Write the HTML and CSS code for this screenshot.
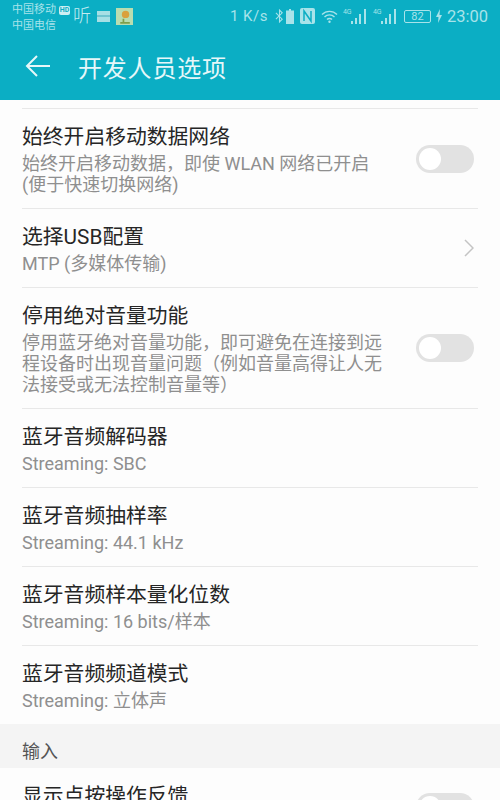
FILE: index.html
```html
<!DOCTYPE html>
<html lang="zh-CN">
<head>
<meta charset="utf-8">
<title>开发人员选项</title>
<link rel="stylesheet" href="styles.css">
</head>
<body>
<div class="phone">
  <header class="header">
    <div class="status">
      <div class="carriers">
        <div class="carrier">中国移动<span class="hd">HD</span></div>
        <div class="carrier">中国电信</div>
      </div>
      <div class="notifs">
        <span class="ting">听</span>
        <svg class="n-mail" viewBox="0 0 13 14"><rect width="13" height="14" y="0" fill="#0baec4"/><rect y="2" width="13" height="11" fill="#a6dfe5"/><rect y="6" width="13" height="2" fill="#6fc4d0"/></svg>
        <svg class="n-app" viewBox="0 0 16 16"><rect width="16" height="16" fill="#b9ddb0"/><circle cx="9" cy="6" r="3.500" fill="#d9a13c"/><path d="M4 14h9M7 10v4" stroke="#7f9e4c" stroke-width="1.600"/></svg>
      </div>
      <div class="spacer"></div>
      <div class="sys">
        <span class="speed">1 K/s</span>
        <svg class="i-bt" viewBox="0 0 10 16"><path d="M1 4.500l7 7L5 14.500V1.500l3 3-7 7" fill="none" stroke="#a8e3ea" stroke-width="1.200"/></svg>
        <svg class="i-batsm" viewBox="0 0 8 15"><path d="M3 0h2v1.500h3V15H0V1.500h3z" fill="#a8e3ea"/></svg>
        <svg class="i-nfc" viewBox="0 0 15 16"><rect width="15" height="16" rx="2" fill="#a8e3ea"/><path d="M4 13V3l7 10V3" fill="none" stroke="#0baec4" stroke-width="1.500"/></svg>
        <svg class="i-wifi" viewBox="0 0 17 14"><path d="M1 5.500a10.500 10.500 0 0 1 15 0M3.500 8a7 7 0 0 1 10 0M6 10.500a3.500 3.500 0 0 1 5 0" fill="none" stroke="#a8e3ea" stroke-width="1.400"/><circle cx="8.500" cy="12.800" r="1.200" fill="#a8e3ea"/></svg>
        <span class="sig"><span class="sig-t">4G</span><svg class="i-sig" viewBox="0 0 16 15"><path d="M0 15v-3h2v3zM4 15V9h2v6zM8 15V5h2v10zM13 15V0h2v15z" fill="#a8e3ea"/></svg></span>
        <span class="sig"><span class="sig-t">4G</span><svg class="i-sig" viewBox="0 0 16 15"><path d="M0 15v-3h2v3zM4 15V9h2v6zM8 15V5h2v10zM13 15V0h2v15z" fill="#a8e3ea"/></svg></span>
        <span class="bat">82</span>
        <svg class="i-bolt" viewBox="0 0 6 14"><path d="M4 0L0 8h2.500L2 14l4-8H3.500z" fill="#a8e3ea"/></svg>
        <span class="time">23:00</span>
      </div>
    </div>
    <div class="toolbar">
      <svg class="back" viewBox="0 0 26 24"><path d="M25 12H2M12 2L2 12l10 10" fill="none" stroke="#e6f7f9" stroke-width="2"/></svg>
      <h1 class="title">开发人员选项</h1>
    </div>
  </header>
  <main class="list">
    <div class="top-gap"></div>
    <div class="row">
      <div class="text"><div class="t">始终开启移动数据网络</div><div class="s">始终开启移动数据，即使 WLAN 网络已开启<br>(便于快速切换网络)</div></div>
      <span class="switch"></span>
    </div>
    <div class="row">
      <div class="text"><div class="t">选择USB配置</div><div class="s">MTP (多媒体传输)</div></div>
      <svg class="chev" viewBox="0 0 10 18"><path d="M1 1l8 8-8 8" fill="none" stroke="#c4c4c4" stroke-width="1.500"/></svg>
    </div>
    <div class="row">
      <div class="text"><div class="t">停用绝对音量功能</div><div class="s">停用蓝牙绝对音量功能，即可避免在连接到远<br>程设备时出现音量问题（例如音量高得让人无<br>法接受或无法控制音量等）</div></div>
      <span class="switch"></span>
    </div>
    <div class="row">
      <div class="text"><div class="t">蓝牙音频解码器</div><div class="s">Streaming: SBC</div></div>
    </div>
    <div class="row">
      <div class="text"><div class="t">蓝牙音频抽样率</div><div class="s">Streaming: 44.1 kHz</div></div>
    </div>
    <div class="row">
      <div class="text"><div class="t">蓝牙音频样本量化位数</div><div class="s">Streaming: 16 bits/样本</div></div>
    </div>
    <div class="row">
      <div class="text"><div class="t">蓝牙音频频道模式</div><div class="s">Streaming: 立体声</div></div>
    </div>
    <div class="section">输入</div>
    <div class="row">
      <div class="text"><div class="t">显示点按操作反馈</div></div>
      <span class="switch peek"></span>
    </div>
  </main>
</div>
</body>
</html>
```
FILE: styles.css
```css
* { box-sizing: border-box; }
html, body { margin: 0; padding: 0; }
body { font-family: Roboto, "Noto Sans CJK SC", sans-serif; background: #fdfdfd; }
.phone { width: 500px; height: 800px; overflow: hidden; display: flex; flex-direction: column; }

.header { height: 100px; flex: none; background: #0baec4; }
.status { height: 36px; display: flex; align-items: flex-start; padding: 2px 12px 0 12px; color: #a8e3ea; }
.carriers { font-size: 11px; line-height: 16px; width: 58px; }
.carrier { white-space: nowrap; display: flex; align-items: center; }
.hd { font-size: 7px; line-height: 9px; width: 11px; text-align: center; font-weight: 700; background: #cdeff3; color: #0baec4; border-radius: 2px; margin-left: 3px; }
.notifs { display: flex; align-items: center; gap: 6px; margin: 6px 0 0 3px; height: 16px; }
.ting { font-size: 18px; line-height: 16px; font-weight: 300; color: #c4ecf1; }
.n-mail { width: 13px; height: 14px; }
.n-app { width: 17px; height: 17px; }
.spacer { flex: 1; }
.sys { display: flex; align-items: center; height: 28px; }
.speed { font-size: 15px; letter-spacing: .5px; margin-right: 7px; }
.i-bt { width: 9px; height: 16px; margin-right: 2px; }
.i-batsm { width: 8px; height: 15px; margin-right: 6px; }
.i-nfc { width: 15px; height: 16px; margin-right: 6px; }
.i-wifi { width: 17px; height: 14px; margin-right: 5px; }
.sig { display: flex; align-items: flex-end; margin-right: 6px; height: 16px; }
.sig + .sig { margin-right: 7px; }
.sig-t { font-size: 7px; line-height: 8px; align-self: flex-start; width: 8px; }
.i-sig { width: 16px; height: 15px; }
.bat { width: 27px; height: 13px; border: 1px solid #a8e3ea; border-radius: 2px; font-size: 11px; line-height: 11px; text-align: center; }
.i-bolt { width: 6px; height: 14px; margin: 0 5px 0 5px; }
.time { font-size: 16.500px; }

.toolbar { height: 64px; display: flex; align-items: center; padding: 0 0 4px 25px; }
.back { width: 26px; height: 24px; }
.title { margin: 0 0 0 27px; font-size: 24px; font-weight: 400; letter-spacing: .8px; color: #e6f7f9; }

.list { flex: 1; }
.top-gap { height: 8px; }
.row { margin-left: 22px; margin-right: 22px; border-top: 1px solid #e8e8e8; padding: 13px 0; display: flex; align-items: center; justify-content: space-between; }
.text { flex: 1; min-width: 0; }
.t { font-size: 20.800px; line-height: 30px; margin-bottom: 1px; color: #262626; white-space: nowrap; }
.s { font-size: 18px; line-height: 21px; color: #8f8f8f; white-space: nowrap; }
.switch { flex: none; width: 58px; height: 28px; border-radius: 14px; background: #e2e2e2; position: relative; margin-right: 4px; }
.switch::before { content: ""; position: absolute; left: 3px; top: 3px; width: 22px; height: 22px; border-radius: 50%; background: #fff; }
.switch.peek { margin-top: 12px; }
.chev { flex: none; width: 10px; height: 18px; margin-right: 4px; }
.section { height: 44px; background: #f4f4f4; padding: 16px 0 0 22px; font-size: 18px; line-height: 24px; color: #555; }
.section + .row { border-top: 0; height: 60px; align-items: flex-start; }
```
